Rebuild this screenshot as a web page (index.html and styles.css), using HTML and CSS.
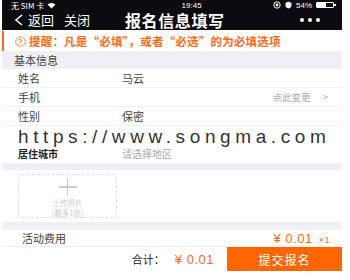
FILE: index.html
```html
<!DOCTYPE html>
<html lang="zh">
<head>
<meta charset="utf-8">
<link rel="stylesheet" href="styles.css">
</head>
<body>
<div class="page">
  <div class="topbar">
    <div class="status">
      <span class="carrier">无 SIM 卡 <svg width="9" height="7" viewBox="0 0 9 7"><path d="M0.5 2.5 A6 6 0 0 1 8.5 2.5 L4.5 6.5 Z" fill="#fff"/></svg></span>
      <span class="time">19:45</span>
      <span class="sys">
        <svg width="8" height="8" viewBox="0 0 8 8"><circle cx="4" cy="4" r="3.2" fill="none" stroke="#fff" stroke-width="1"/><circle cx="4" cy="4" r="1.4" fill="#fff"/></svg>
        <svg width="7" height="8" viewBox="0 0 7 8"><path d="M3.5 0.5 L6.5 2 L6.5 4 Q6.5 6.5 3.5 7.5 Q0.5 6.5 0.5 4 L0.5 2 Z" fill="#fff"/></svg>
        <span class="pct">54%</span>
        <span class="battery"><span class="level"></span></span>
      </span>
    </div>
    <div class="nav">
      <div class="nav-left">
        <svg class="back" width="10" height="12" viewBox="0 0 10 12"><path d="M8 1 L2 6 L8 11" fill="none" stroke="#fff" stroke-width="1.6"/></svg>
        <span>返回</span>
        <span class="close">关闭</span>
      </div>
      <div class="title">报名信息填写</div>
      <div class="more"><i></i><i></i><i></i></div>
    </div>
  </div>

  <div class="notice">
    <svg width="11" height="11" viewBox="0 0 11 11"><circle cx="5.5" cy="5.5" r="4.8" fill="none" stroke="#ff7a2a" stroke-width="0.9"/><text x="5.5" y="8.2" font-size="7.5" text-anchor="middle" fill="#ff7a2a" font-family="Liberation Sans, sans-serif">?</text></svg>
    <span>提醒：凡是“必填”，或者“必选”的为必填选项</span>
  </div>

  <div class="section-title">基本信息</div>
  <div class="form">
    <div class="row"><span class="label">姓名</span><span class="value">马云</span></div>
    <div class="row"><span class="label">手机</span><span class="value"></span><span class="action">点此变更 <span class="chev">&gt;</span></span></div>
    <div class="row"><span class="label">性别</span><span class="value">保密</span></div>
    <div class="row tall"><span class="label dark">居住城市</span><span class="value hint">请选择地区</span></div>
    <div class="watermark">https://www.songma.com</div>
  </div>

  <div class="gap first"></div>
  <div class="upload">
    <div class="upbox">
      <div class="plus"></div>
      <div class="uptext">上传照片</div>
      <div class="uptext">(最多1张)</div>
    </div>
  </div>
  <div class="gap"></div>

  <div class="fee">
    <span class="label">活动费用</span>
    <span class="price">¥ 0.01 <small>×1</small></span>
  </div>

  <div class="footer">
    <div class="total">合计：<span class="sum">¥ 0.01</span></div>
    <div class="submit">提交报名</div>
  </div>
</div>
</body>
</html>
```
FILE: styles.css
```css
* { box-sizing: border-box; }
html, body { margin: 0; padding: 0; background: #fff; }
body {
  font-family: "Noto Sans CJK SC", "Noto Sans", sans-serif;
  color: #333;
  width: 350px;
  height: 280px;
  overflow: hidden;
}
.page {
  width: 340px;
  margin-left: 2px;
  display: flex;
  flex-direction: column;
}
.topbar { background: #0b0b10; color: #fff; height: 30px; }
.status {
  height: 10px;
  display: flex;
  align-items: center;
  justify-content: space-between;
  padding: 0 8px 0 9px;
  font-size: 8px;
  line-height: 9px;
  overflow: hidden;
}
.carrier { display: flex; align-items: center; gap: 3px; }
.time { margin-left: 54px; font-family: "Liberation Sans", sans-serif; }
.sys { display: flex; align-items: center; gap: 4px; }
.pct { font-family: "Liberation Sans", sans-serif; font-size: 8px; }
.battery {
  width: 18px; height: 6px;
  border: 1px solid #fff; border-radius: 1px;
  position: relative;
  display: inline-block;
}
.battery::after {
  content: ""; position: absolute; right: -3px; top: 1px; width: 2px; height: 2px; background: #fff;
}
.level { display: block; width: 9px; height: 100%; background: #fff; }
.nav {
  height: 20px;
  line-height: 20px;
  display: flex;
  align-items: center;
  padding: 0 12px 0 12px;
}
.nav-left { display: flex; align-items: center; font-size: 13px; gap: 3px; width: 110px; }
.back { margin-right: 1px; }
.close { margin-left: 7px; }
.title { font-size: 16px; font-weight: bold; letter-spacing: 0.6px; margin-left: 1px; flex: 1; }
.more { display: flex; gap: 4px; margin-right: 10px; }
.more i { width: 4px; height: 4px; border-radius: 50%; background: #fff; display: block; }

.notice {
  height: 20px;
  margin-top: 1px;
  border-left: 2px solid #ff6a1a;
  display: flex;
  align-items: center;
  gap: 3px;
  padding-left: 11px;
  color: #ff6a1a;
  font-size: 11.5px;
  font-weight: bold;
  letter-spacing: 0.2px;
  white-space: nowrap;
}
.section-title {
  background: #efeff4;
  height: 18px;
  padding-left: 12px;
  font-size: 11px;
  line-height: 18px;
  color: #444;
}
.form { position: relative; background: #fff; }
.row {
  height: 19px;
  display: flex;
  align-items: center;
  padding-left: 16px;
  border-bottom: 1px solid #f2f2f2;
  font-size: 11px;
  color: #444;
}
.row.tall { height: 37px; align-items: flex-end; padding-bottom: 2px; border-bottom: none; }
.label { width: 104px; }
.label.dark { color: #222; font-weight: bold; font-size: 10px; }
.value { flex: 1; }
.hint { color: #aaa; font-size: 10px; }
.action { color: #aaa; font-size: 9.5px; margin-right: 14px; }
.chev { margin-left: 10px; }
.watermark {
  position: absolute;
  left: 16px;
  top: 57px;
  font-family: "Liberation Sans", sans-serif;
  font-size: 19px;
  line-height: 22px;
  letter-spacing: 4.6px;
  color: #333;
  white-space: nowrap;
}
.gap { height: 8px; background: #efeff4; }
.gap.first { height: 7px; }
.upload { height: 52px; padding: 4px 0 0 16px; }
.upbox {
  width: 99px; height: 44px;
  border: 1.5px dashed #ddd;
  border-radius: 4px;
  display: flex;
  flex-direction: column;
  align-items: center;
  padding-top: 3px;
}
.plus { width: 18px; height: 18px; position: relative; flex: none; margin-bottom: 1px; }
.plus::before, .plus::after { content: ""; position: absolute; background: #ccc; }
.plus::before { left: 8px; top: 0; width: 1.5px; height: 18px; }
.plus::after { top: 8px; left: 0; height: 1.5px; width: 18px; }
.uptext { color: #ccc; font-size: 7.5px; line-height: 11px; height: 10px; text-align: center; }
.fee {
  height: 17px;
  display: flex;
  align-items: center;
  padding-left: 20px;
  border-bottom: 1px solid #f0f0f0;
  font-size: 11px;
  color: #444;
}
.fee .label { flex: 1; }
.price { color: #ff6a1a; font-family: "Liberation Sans", sans-serif; font-size: 13px; margin-right: 12px; letter-spacing: 0.5px; }
.price small { font-size: 9px; margin-left: 2px; }
.footer { height: 24px; display: flex; align-items: center; }
.total { flex: 1; text-align: right; padding-right: 13px; font-size: 11px; color: #222; }
.sum { color: #ff6a1a; font-family: "Liberation Sans", sans-serif; font-size: 13px; margin-left: 10px; letter-spacing: 0.5px; }
.submit {
  width: 115px; height: 24px;
  background: #ff6600;
  color: #fff;
  font-size: 12px;
  letter-spacing: 1px;
  display: flex; align-items: center; justify-content: center;
}
```
